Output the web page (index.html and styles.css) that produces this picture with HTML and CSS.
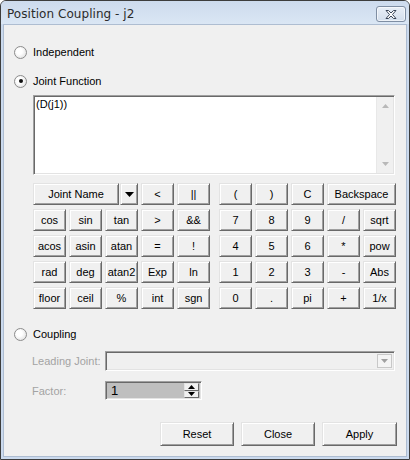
FILE: index.html
```html
<!DOCTYPE html>
<html>
<head>
<meta charset="utf-8">
<link rel="stylesheet" href="styles.css">
</head>
<body>
<div class="window">
  <div class="titlebar">
    <span class="title">Position Coupling - j2</span>
    <span class="close-btn">
      <svg width="16" height="11" viewBox="0 0 16 11">
        <path d="M3 1.5 L5.5 1.5 L8 4 L10.5 1.5 L13 1.5 L9.5 5.5 L13 9.5 L10.5 9.5 L8 7 L5.5 9.5 L3 9.5 L6.5 5.5 Z" fill="#ffffff" stroke="#3b4658" stroke-width="1" stroke-linejoin="round"/>
      </svg>
    </span>
  </div>
  <div class="client">
    <div class="radio-row first"><span class="radio"></span><span>Independent</span></div>
    <div class="radio-row second"><span class="radio checked"></span><span>Joint Function</span></div>
    <div class="editor">
      <div class="editor-text">(D(j1))</div>
      <div class="vscroll">
        <svg class="arr" width="7" height="4" viewBox="0 0 7 4"><path d="M0 4 L3.5 0 L7 4 Z" fill="#b8b8b8"/></svg>
        <svg class="arr" width="7" height="4" viewBox="0 0 7 4"><path d="M0 0 L3.5 4 L7 0 Z" fill="#b8b8b8"/></svg>
      </div>
    </div>
    <div class="pad">
      <div class="grid">
        <div class="joint">
          <div class="btn jname">Joint Name</div>
          <div class="btn dd"><svg width="9" height="5" viewBox="0 0 9 5"><path d="M0 0 L9 0 L4.5 5 Z" fill="#000"/></svg></div>
        </div>
        <div class="btn">&lt;</div>
        <div class="btn">||</div>
        <div class="btn">cos</div><div class="btn">sin</div><div class="btn">tan</div><div class="btn">&gt;</div><div class="btn">&amp;&amp;</div>
        <div class="btn">acos</div><div class="btn">asin</div><div class="btn">atan</div><div class="btn">=</div><div class="btn">!</div>
        <div class="btn">rad</div><div class="btn">deg</div><div class="btn">atan2</div><div class="btn">Exp</div><div class="btn">ln</div>
        <div class="btn">floor</div><div class="btn">ceil</div><div class="btn">%</div><div class="btn">int</div><div class="btn">sgn</div>
      </div>
      <div class="grid">
        <div class="btn">(</div><div class="btn">)</div><div class="btn">C</div><div class="btn span2">Backspace</div>
        <div class="btn">7</div><div class="btn">8</div><div class="btn">9</div><div class="btn">/</div><div class="btn">sqrt</div>
        <div class="btn">4</div><div class="btn">5</div><div class="btn">6</div><div class="btn">*</div><div class="btn">pow</div>
        <div class="btn">1</div><div class="btn">2</div><div class="btn">3</div><div class="btn">-</div><div class="btn">Abs</div>
        <div class="btn">0</div><div class="btn">.</div><div class="btn">pi</div><div class="btn">+</div><div class="btn">1/x</div>
      </div>
    </div>
    <div class="radio-row third"><span class="radio"></span><span>Coupling</span></div>
    <div class="field-row lead">
      <span class="label">Leading Joint:</span>
      <div class="combo">
        <div class="combo-btn"><svg width="7" height="4" viewBox="0 0 7 4"><path d="M0 0 L7 0 L3.5 4 Z" fill="#a0a0a0"/></svg></div>
      </div>
    </div>
    <div class="field-row factor">
      <span class="label">Factor:</span>
      <div class="spin">
        <span class="spin-val">1</span>
        <div class="spin-btns">
          <div class="spin-b"><svg width="7" height="4" viewBox="0 0 7 4"><path d="M0 4 L3.5 0 L7 4 Z" fill="#000"/></svg></div>
          <div class="spin-b"><svg width="7" height="4" viewBox="0 0 7 4"><path d="M0 0 L7 0 L3.5 4 Z" fill="#000"/></svg></div>
        </div>
      </div>
    </div>
    <div class="actions">
      <div class="btn act">Reset</div>
      <div class="btn act">Close</div>
      <div class="btn act">Apply</div>
    </div>
  </div>
</div>
</body>
</html>
```

FILE: styles.css
```css
html, body {
  margin: 0;
  padding: 0;
  background: #ffffff;
}
body {
  font-family: "Liberation Sans", Arial, sans-serif;
  font-size: 11px;
  color: #000;
}
.window {
  width: 410px;
  height: 460px;
  box-sizing: border-box;
  border: 1px solid #3d3d3d;
  border-radius: 6px 6px 0 0;
  background: #cbdaee;
  padding: 0 2px 2px 2px;
  display: flex;
  flex-direction: column;
  overflow: hidden;
}
.titlebar {
  height: 23px;
  flex: none;
  display: flex;
  align-items: center;
  justify-content: space-between;
  background: linear-gradient(#cddbed, #dae6f4);
  margin: 0 -2px;
  padding: 0 3px 0 6px;
}
.title {
  font-family: "DejaVu Sans", "Liberation Sans", sans-serif;
  font-size: 12px;
  letter-spacing: 0.05px;
  color: #2b2b2b;
  margin-top: 3px;
}
.close-btn {
  width: 28px;
  height: 14px;
  border: 1px solid #7f8ea3;
  border-radius: 3px;
  background: linear-gradient(#e9eff7, #d3deec);
  display: flex;
  align-items: center;
  justify-content: center;
  box-shadow: inset 0 0 0 1px rgba(255,255,255,0.6);
  margin-top: 3px;
}
.client {
  flex: 1;
  background: #f0f0f0;
  border: 1px solid #aebdd1;
  padding: 0 9px 0 10px;
}
.radio-row {
  display: flex;
  align-items: center;
  height: 16px;
  gap: 6px;
}
.radio-row.first { margin-top: 19px; }
.radio-row.second { margin-top: 13px; }
.radio-row.third { margin-top: 17px; }
.radio {
  width: 11px;
  height: 11px;
  border: 1px solid #8c8c8c;
  border-radius: 50%;
  background: radial-gradient(circle at 40% 40%, #ffffff 30%, #d8d8d8 100%);
  display: flex;
  align-items: center;
  justify-content: center;
  flex: none;
}
.radio.checked::after {
  content: "";
  width: 4px;
  height: 4px;
  border-radius: 50%;
  background: #101010;
}
.editor {
  margin: 6px 0 0 19px;
  width: 362px;
  height: 80px;
  box-sizing: border-box;
  background: #fff;
  border: 1px solid;
  border-color: #a0a0a0 #ffffff #ffffff #a0a0a0;
  box-shadow: inset 1px 1px #696969, inset -1px -1px #e3e3e3;
  display: flex;
  padding: 1px 1px 1px 1px;
}
.editor-text {
  flex: 1;
  padding: 1px 0 0 1px;
  line-height: 13px;
}
.vscroll {
  width: 16px;
  background: #f0f0f0;
  border-left: 1px solid #e8e8e8;
  display: flex;
  flex-direction: column;
  align-items: center;
  justify-content: space-between;
  padding: 7px 0 7px;
}
.arr { display: block; }
.pad {
  margin: 8px 0 0 19px;
  display: flex;
  gap: 9px;
}
.grid {
  display: grid;
  grid-template-columns: repeat(5, 33px);
  grid-auto-rows: 22px;
  column-gap: 3px;
  row-gap: 4px;
}
.btn {
  box-sizing: border-box;
  background: #f0f0f0;
  border: 1px solid;
  border-color: #e3e3e3 #696969 #696969 #e3e3e3;
  box-shadow: inset 1px 1px #ffffff, inset -1px -1px #a0a0a0;
  display: flex;
  align-items: center;
  justify-content: center;
  white-space: nowrap;
}
.span2 { grid-column: span 2; }
.joint {
  grid-column: span 3;
  display: flex;
  gap: 1px;
}
.jname { flex: 1; }
.dd { width: 18px; flex: none; padding-top: 1px; }
.field-row {
  display: flex;
  align-items: center;
}
.field-row.lead { margin-top: 9px; height: 20px; }
.field-row.factor { margin-top: 10px; height: 19px; }
.label {
  color: #a3a3a3;
  width: 73px;
  margin-left: 18px;
  flex: none;
}
.combo {
  width: 290px;
  height: 20px;
  box-sizing: border-box;
  border: 1px solid;
  border-color: #a0a0a0 #ffffff #ffffff #a0a0a0;
  box-shadow: inset 1px 1px #696969, inset -1px -1px #e3e3e3;
  background: #f0f0f0;
  display: flex;
  justify-content: flex-end;
  padding: 2px;
}
.combo-btn {
  width: 15px;
  box-sizing: border-box;
  border: 1px solid #c8c8c8;
  background: #f4f4f4;
  display: flex;
  align-items: center;
  justify-content: center;
}
.spin {
  width: 97px;
  height: 19px;
  box-sizing: border-box;
  border: 1px solid;
  border-color: #a0a0a0 #ffffff #ffffff #a0a0a0;
  box-shadow: inset 1px 1px #696969, inset -1px -1px #e3e3e3;
  background: #bfbfbf;
  display: flex;
  align-items: center;
  padding: 1px 2px 1px 1px;
}
.spin-val {
  flex: 1;
  padding-left: 4px;
  font-size: 13px;
}
.spin-btns {
  width: 15px;
  height: 15px;
  display: flex;
  flex-direction: column;
}
.spin-b {
  flex: 1;
  box-sizing: border-box;
  background: #f0f0f0;
  border: 1px solid;
  border-color: #e3e3e3 #696969 #696969 #e3e3e3;
  display: flex;
  align-items: center;
  justify-content: center;
}
.actions {
  margin-top: 22px;
  display: flex;
  justify-content: flex-end;
  gap: 7px;
}
.act {
  width: 74px;
  height: 24px;
}
.act:last-child { width: 75px; }
```
